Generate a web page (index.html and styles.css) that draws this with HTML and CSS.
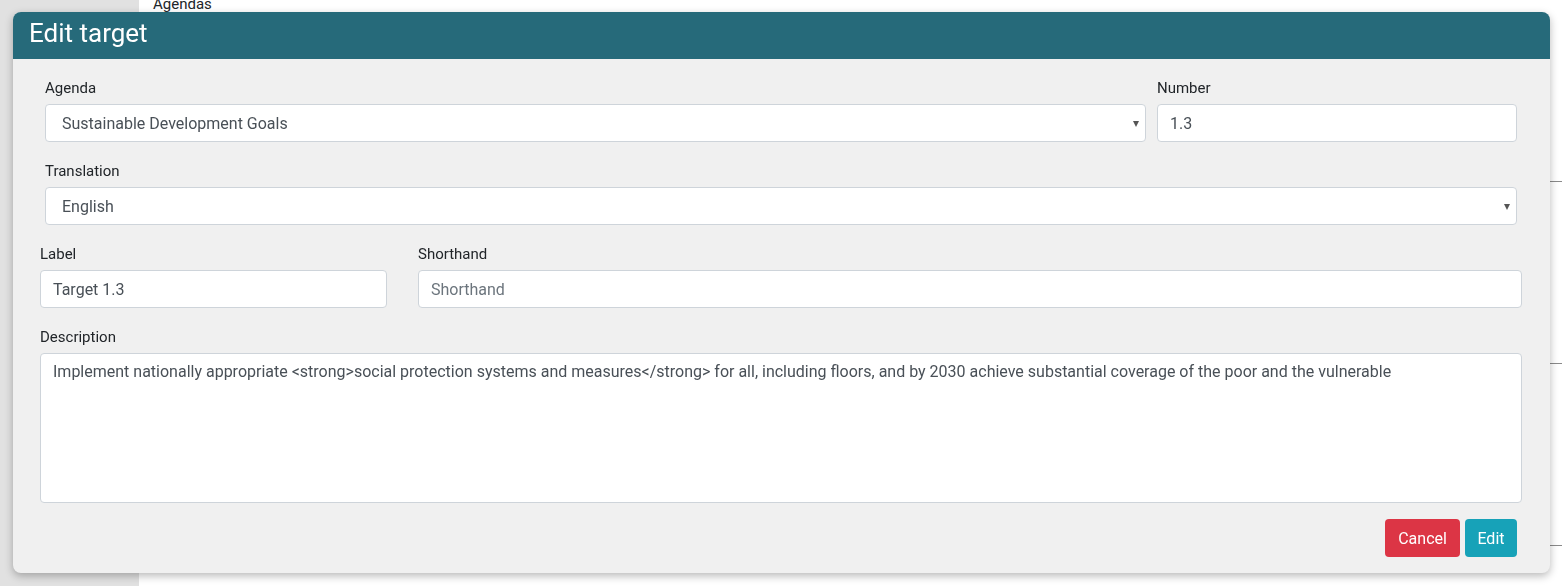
FILE: index.html
```html
<!DOCTYPE html>
<html>
<head>
<meta charset="utf-8">
<title>Edit target</title>
<link rel="stylesheet" href="styles.css">
</head>
<body>
<div class="page">
  <aside class="sidebar"></aside>
  <main class="main">
    <div class="main-title">Agendas</div>
    <div class="list">
      <div class="list-row"></div>
      <div class="list-row"></div>
      <div class="list-row"></div>
    </div>
  </main>
</div>

<div class="modal">
  <div class="modal-header">Edit target</div>
  <div class="modal-body">
    <div class="section section-a">
      <div class="grid-a">
        <div class="group">
          <div class="label">Agenda</div>
          <div class="control select">Sustainable Development Goals<span class="caret"></span></div>
        </div>
        <div class="group">
          <div class="label">Number</div>
          <div class="control">1.3</div>
        </div>
      </div>
      <div class="group">
        <div class="label">Translation</div>
        <div class="control select">English<span class="caret"></span></div>
      </div>
    </div>
    <div class="section section-b">
      <div class="grid-b">
        <div class="group">
          <div class="label">Label</div>
          <div class="control">Target 1.3</div>
        </div>
        <div class="group">
          <div class="label">Shorthand</div>
          <div class="control placeholder">Shorthand</div>
        </div>
      </div>
      <div class="group">
        <div class="label">Description</div>
        <div class="control textarea">Implement nationally appropriate &lt;strong&gt;social protection systems and measures&lt;/strong&gt; for all, including floors, and by 2030 achieve substantial coverage of the poor and the vulnerable</div>
      </div>
    </div>
    <div class="actions">
      <button class="btn btn-cancel">Cancel</button>
      <button class="btn btn-edit">Edit</button>
    </div>
  </div>
</div>
</body>
</html>
```

FILE: styles.css
```css
* { box-sizing: border-box; }
html, body { margin: 0; padding: 0; height: 100%; overflow: hidden; }
body {
  font-family: Roboto, "Liberation Sans", sans-serif;
  background: #ffffff;
}
.page { display: flex; height: 586px; }
.sidebar { width: 139px; background: #e1e1e1; flex: none; }
.main { flex: 1; padding-left: 14px; }
.main-title {
  font-size: 15px;
  line-height: 20px;
  color: #212529;
  margin-top: -6px;
}
.list { margin-top: -14px; }
.list-row { height: 182px; border-bottom: 1px solid #8a8a8a; }

.modal {
  position: fixed;
  left: 13px;
  top: 12px;
  width: 1537px;
  border-radius: 8px;
  overflow: hidden;
  background: #f0f0f0;
  box-shadow: 0 3px 8px rgba(0,0,0,0.28);
}
.modal-header {
  background: #266a7a;
  color: #ffffff;
  height: 47px;
  padding-left: 16px;
  font-size: 26px;
  line-height: 43px;
}
.modal-body { padding: 20px 0 16px; }
.section-a { padding: 0 33px 0 32px; }
.section-b { padding: 0 28px 0 27px; }
.grid-a { display: grid; grid-template-columns: 1101px 1fr; column-gap: 11px; }
.grid-b { display: grid; grid-template-columns: 347px 1fr; column-gap: 31px; }
.group { margin-bottom: 20px; }
.label {
  font-size: 15px;
  line-height: 18px;
  color: #212529;
  margin-bottom: 7px;
}
.control {
  position: relative;
  height: 38px;
  background: #ffffff;
  border: 1px solid #ced4da;
  border-radius: 4px;
  padding: 0 12px;
  font-size: 16px;
  line-height: 37px;
  color: #495057;
}
.control.select { padding-left: 16px; }
.placeholder { color: #6c757d; }
.caret {
  position: absolute;
  right: 6px;
  top: 16px;
  width: 0;
  height: 0;
  border-left: 3px solid transparent;
  border-right: 3px solid transparent;
  border-top: 6px solid #555;
}
.textarea {
  height: 150px;
  line-height: 24px;
  padding-top: 6px;
}
.section-b .group:last-child { margin-bottom: 16px; }
.actions {
  display: flex;
  justify-content: flex-end;
  gap: 5px;
  padding-right: 33px;
}
.btn {
  height: 38px;
  border: none;
  border-radius: 4px;
  padding: 0 12px;
  font-family: Roboto, "Liberation Sans", sans-serif;
  font-size: 16px;
  color: #ffffff;
}
.btn-cancel { background: #dc3545; padding: 0 13px; }
.btn-edit { background: #17a2b8; padding: 0 12.5px; }
```
